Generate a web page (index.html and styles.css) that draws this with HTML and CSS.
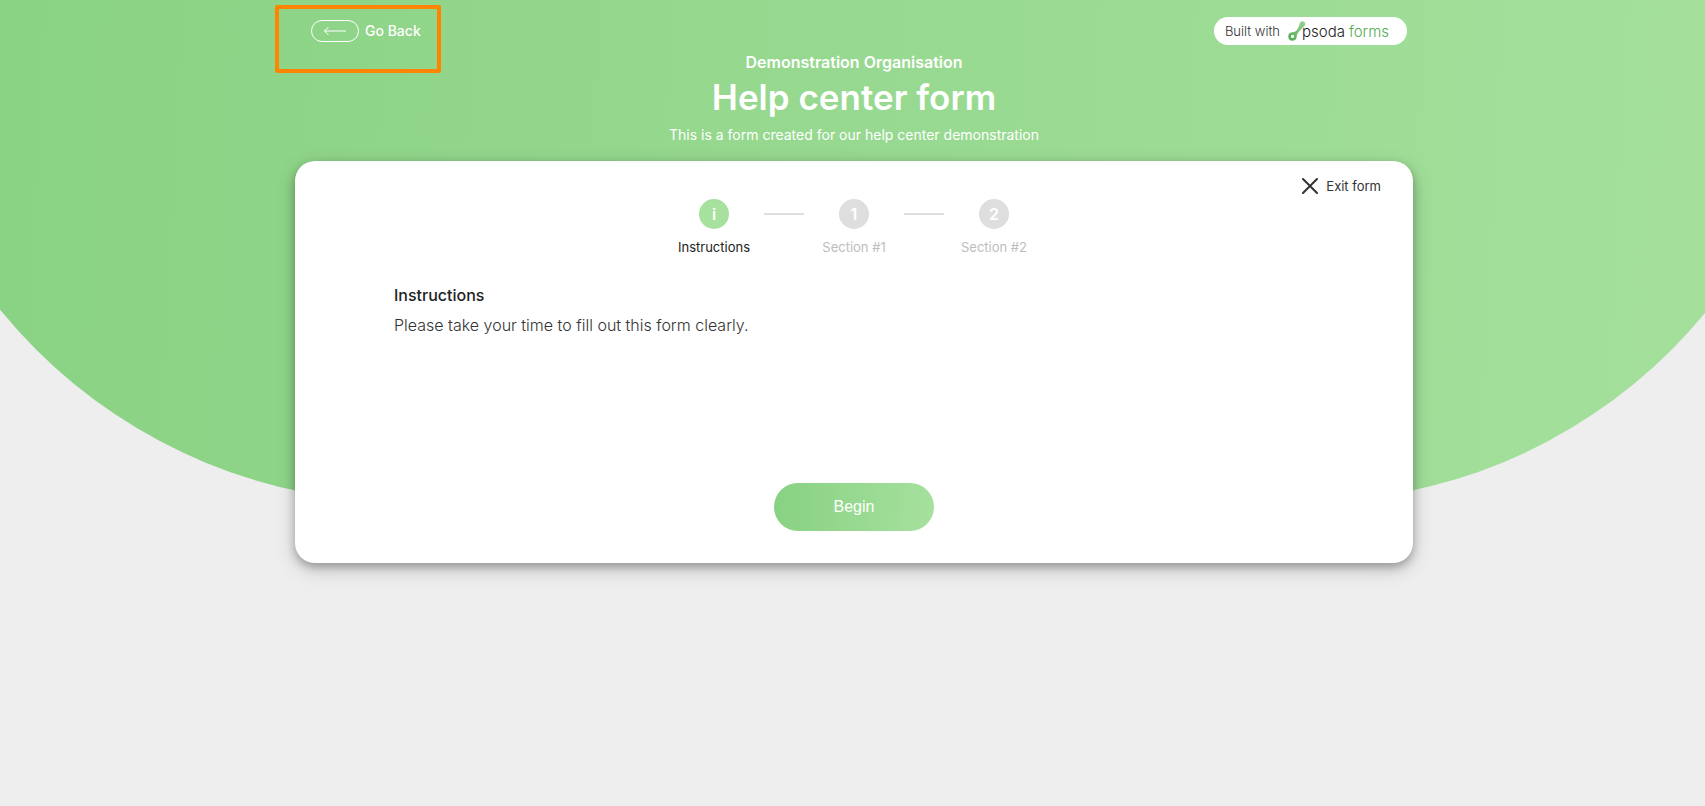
FILE: index.html
```html
<!DOCTYPE html>
<html lang="en">
<head>
<meta charset="utf-8">
<meta name="viewport" content="width=device-width, initial-scale=1">
<title>Help center form</title>
<link rel="stylesheet" href="styles.css">
</head>
<body>
<div class="page">
  <div class="backdrop"></div>
  <div class="column">
    <nav class="topbar">
      <div class="back-area">
        <button class="back" type="button">
          <span class="back-pill">
            <svg width="24" height="10" viewBox="0 0 24 10" fill="none" stroke="currentColor" stroke-width="1"><path d="M5.5 1 1.5 5l4 4M1.5 5H23"/></svg>
          </span>
          <span>Go Back</span>
        </button>
      </div>
      <a class="built" href="#">
        <span class="built-label">Built with</span>
        <span class="logo">
          <svg width="18" height="20" viewBox="0 0 18 20">
            <defs><linearGradient id="stem" x1="1" y1="0" x2="0" y2="1"><stop offset="0" stop-color="#9ad695"/><stop offset="1" stop-color="#50a84e"/></linearGradient></defs>
            <path fill="url(#stem)" fill-rule="evenodd" d="M11.800 2.500a2.800 2.800 0 1 1 4.300 2.900c-2.300 2-5.300 4.600-6.800 7.600-.5 1-.6 1.600-.6 2.500a4.200 4.200 0 1 1-4.600-4.200c3.200-.4 4.600-1.600 5.800-3.900.9-1.700 1.500-3.200 1.900-4.900zM4.500 13.700a1.700 1.700 0 1 0 0 3.400 1.700 1.700 0 0 0 0-3.400z"/>
          </svg>
          <span class="logo-name">psoda</span>
          <span class="logo-product">forms</span>
        </span>
      </a>
    </nav>

    <header class="heading">
      <p class="org">Demonstration Organisation</p>
      <h1 class="title">Help center form</h1>
      <p class="summary">This is a form created for our help center demonstration</p>
    </header>

    <main class="card">
      <button class="exit" type="button">
        <svg width="16" height="16" viewBox="0 0 16 16" stroke="#333" stroke-width="2" stroke-linecap="round"><path d="M1 1l14 14M15 1 1 15"/></svg>
        <span>Exit form</span>
      </button>
      <ol class="steps">
        <li class="step step-current"><span class="dot">i</span><span>Instructions</span></li>
        <li class="line"></li>
        <li class="step"><span class="dot">1</span><span>Section #1</span></li>
        <li class="line"></li>
        <li class="step"><span class="dot">2</span><span>Section #2</span></li>
      </ol>
      <section class="content">
        <h2 class="subtitle">Instructions</h2>
        <p class="text">Please take your time to fill out this form clearly.</p>
      </section>
      <button class="begin" type="button">Begin</button>
    </main>
  </div>
</div>
</body>
</html>
```
FILE: styles.css
```css
* { box-sizing: border-box; }
body {
  margin: 0;
  background: #eeeeee;
  color: #222;
  font-family: Inter, "Liberation Sans", sans-serif;
}
button { border: 0; padding: 0; background: none; font: inherit; color: inherit; cursor: pointer; }
a { color: inherit; text-decoration: none; }
p, h1, h2, ol { margin: 0; padding: 0; }
.page {
  position: relative;
  min-height: 100vh;
  padding-left: 3px;
  overflow: hidden;
}
.backdrop {
  position: absolute;
  top: -20px;
  left: -116px;
  right: -119px;
  height: 522px;
  border-radius: 0 0 520px 520px;
  background: linear-gradient(93deg, #88d182, #a6e19e);
}
.column {
  position: relative;
  width: 90%;
  max-width: 1118px;
  margin: 0 auto;
}
.topbar {
  display: flex;
  justify-content: space-between;
  align-items: flex-start;
  height: 48px;
  padding: 5px 6px 0 0;
}
.back-area {
  width: 166px;
  height: 68px;
  margin-left: -20px;
  padding: 11px 32px;
  border: 4px solid #ff8500;
  border-radius: 2px;
}
.back {
  display: flex;
  align-items: center;
  gap: 6px;
  color: #fff;
  font-size: 14px;
  line-height: 22px;
  font-weight: 500;
  white-space: nowrap;
}
.back-pill {
  display: flex;
  align-items: center;
  justify-content: center;
  width: 48px;
  height: 22px;
  border: 1px solid #fff;
  border-radius: 11px;
}
.built {
  display: flex;
  align-items: center;
  gap: 8px;
  height: 28px;
  margin-top: 12px;
  padding: 0 18px 0 11px;
  border-radius: 14px;
  background: #fff;
}
.built-label { font-size: 13px; font-weight: 300; }
.logo {
  display: flex;
  align-items: center;
  font-size: 15px;
  font-weight: 300;
  line-height: 20px;
}
.logo-name, .logo-product { padding-top: 2px; }
.logo-name { margin-left: -4px; color: #222; }
.logo-product { margin-left: 4px; color: #55ab52; }
.heading {
  display: flex;
  flex-direction: column;
  align-items: center;
  color: #fff;
  text-align: center;
}
.org { padding-top: 4px; font-size: 16px; line-height: 20px; font-weight: 600; }
.title { padding-top: 3px; font-size: 35px; line-height: 44px; font-weight: 600; }
.summary { padding-top: 6px; font-size: 14px; line-height: 20px; }
.card {
  position: relative;
  display: flex;
  flex-direction: column;
  align-items: center;
  margin-top: 16px;
  padding: 38px 32px 32px;
  border-radius: 20px;
  background: #fff;
  box-shadow: 0 4px 8px rgba(0, 0, 0, .25), 0 6px 20px rgba(0, 0, 0, .19);
}
.exit {
  position: absolute;
  top: 17px;
  right: 32px;
  display: flex;
  align-items: center;
  gap: 8px;
  font-size: 13px;
  line-height: 16px;
}
.steps { display: flex; list-style: none; }
.step {
  display: flex;
  flex-direction: column;
  align-items: center;
  gap: 10px;
  width: 100px;
  color: #bdbdbd;
  font-size: 13px;
  line-height: 16px;
}
.step-current { color: #222; }
.dot {
  width: 30px;
  height: 30px;
  border-radius: 50%;
  background: #dedede;
  color: #fff;
  font-size: 16px;
  line-height: 30px;
  font-weight: 600;
  text-align: center;
}
.step-current .dot { background: #a6e19e; }
.line { width: 40px; height: 2px; margin-top: 14px; background: #dedede; }
.content {
  align-self: stretch;
  min-height: 163px;
  margin-top: 28px;
  padding: 0 67px;
}
.subtitle { font-size: 16px; line-height: 24px; font-weight: 500; }
.text { padding-top: 6px; font-size: 16px; line-height: 24px; font-weight: 300; }
.exit, .text, .built-label { color: #333; }
.begin {
  width: 160px;
  height: 48px;
  margin-top: 37px;
  border-radius: 24px;
  background: linear-gradient(93deg, #88d182, #a6e19e);
  color: #fff;
  font-family: "Liberation Sans", Arial, sans-serif;
  font-size: 16px;
}
```
